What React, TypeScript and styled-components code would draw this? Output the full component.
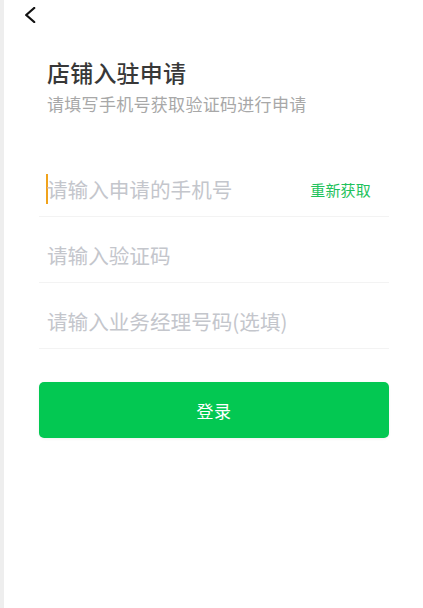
import React from "react";
import styled, { createGlobalStyle } from "styled-components";

const Global = createGlobalStyle`
  html, body { margin: 0; padding: 0; background: #ffffff; }
  body { font-family: "Noto Sans CJK SC", "Noto Sans", sans-serif; }
  * { box-sizing: border-box; }
`;

const Page = styled.div`
  display: flex;
  min-height: 100vh;
  background: #ffffff;
`;

const Edge = styled.div`
  width: 4px;
  flex: none;
  background: #eeeeee;
`;

const Main = styled.div`
  flex: 1;
  display: flex;
  flex-direction: column;
`;

const NavBar = styled.div`
  height: 30px;
  padding: 7px 0 0 20px;
  display: flex;
  align-items: flex-start;
`;

const BackButton = styled.button`
  border: none;
  background: transparent;
  padding: 0;
  width: 12px;
  height: 16px;
  display: block;
  cursor: pointer;
`;

const Body = styled.div`
  padding: 0 34px 0 35px;
  display: flex;
  flex-direction: column;
`;

const Header = styled.div`
  padding-left: 8px;
  margin-top: 26px;
`;

const Title = styled.h1`
  margin: 0;
  font-size: 23px;
  line-height: 32px;
  font-weight: 500;
  color: #383838;
  letter-spacing: 0.2px;
`;

const Subtitle = styled.p`
  margin: 4px 0 0;
  font-size: 17px;
  line-height: 24px;
  color: #a8a8a8;
  letter-spacing: 0.3px;
`;

const Form = styled.form`
  margin-top: 35px;
  display: flex;
  flex-direction: column;
`;

const Row = styled.label`
  height: 66px;
  padding: 11px 18px 0 8px;
  display: flex;
  align-items: center;
  border-bottom: 1px solid #f3f3f3;
`;

const Caret = styled.span`
  width: 2px;
  height: 30px;
  background: #f0a31c;
  margin-left: -1px;
  margin-right: -1px;
  flex: none;
`;

const Field = styled.input`
  flex: 1;
  min-width: 0;
  border: none;
  outline: none;
  background: transparent;
  padding: 0;
  font-family: "Noto Sans CJK SC", "Noto Sans", sans-serif;
  font-size: 20.6px;
  color: #333333;
  &::placeholder {
    color: #c4c6cc;
  }
`;

const Resend = styled.span`
  flex: none;
  font-size: 15px;
  color: #1fc25c;
  letter-spacing: 0.2px;
`;

const Submit = styled.button`
  margin-top: 33px;
  height: 56px;
  width: 100%;
  border: none;
  border-radius: 5px;
  background: #03c852;
  color: #ffffff;
  font-family: "Noto Sans CJK SC", "Noto Sans", sans-serif;
  font-size: 17px;
  letter-spacing: 0.5px;
  box-shadow: 0 1px 3px rgba(0, 0, 0, 0.06);
  cursor: pointer;
`;

export default function App() {
  return (
    <>
      <Global />
      <Page>
        <Edge />
        <Main>
          <NavBar>
            <BackButton aria-label="返回">
              <svg width="12" height="16" viewBox="0 0 12 16" fill="none">
                <polyline
                  points="10.2,1 2.2,8 10.2,15"
                  stroke="#111111"
                  strokeWidth="2.3"
                  strokeLinecap="round"
                  strokeLinejoin="round"
                />
              </svg>
            </BackButton>
          </NavBar>
          <Body>
            <Header>
              <Title>店铺入驻申请</Title>
              <Subtitle>请填写手机号获取验证码进行申请</Subtitle>
            </Header>
            <Form onSubmit={(e) => e.preventDefault()}>
              <Row>
                <Caret />
                <Field placeholder="请输入申请的手机号" />
                <Resend>重新获取</Resend>
              </Row>
              <Row>
                <Field placeholder="请输入验证码" />
              </Row>
              <Row>
                <Field placeholder="请输入业务经理号码(选填)" />
              </Row>
              <Submit type="submit">登录</Submit>
            </Form>
          </Body>
        </Main>
      </Page>
    </>
  );
}
